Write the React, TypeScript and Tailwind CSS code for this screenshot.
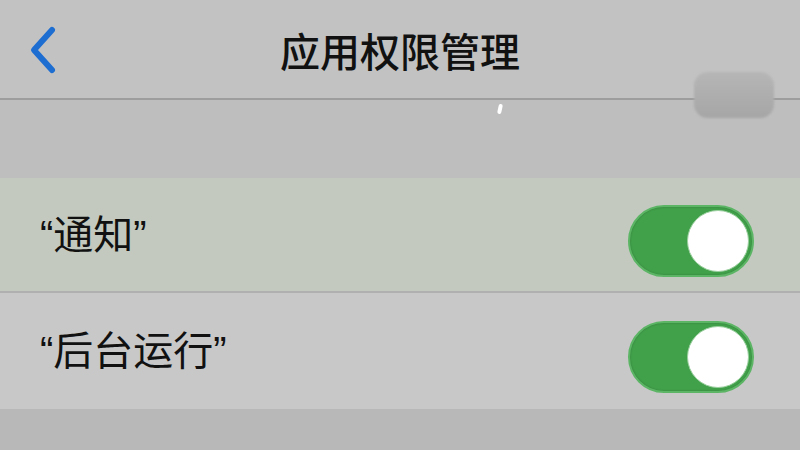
import React from "react";

const cjk = { fontFamily: '"Liberation Sans", "Noto Sans CJK SC", sans-serif' };

function Toggle() {
  return (
    <div className="mt-[12px] flex h-[72px] w-[126px] items-center justify-end rounded-full border-2 border-[#5cb565] bg-[#41a04a] p-[3px] shadow-[inset_0_0_2px_rgba(0,0,0,0.25)]">
      <div className="h-[62px] w-[62px] rounded-full border border-[#9bcf9f] bg-white" />
    </div>
  );
}

function Row({ label, bg, h, border }: { label: string; bg: string; h: string; border?: boolean }) {
  return (
    <div className={`flex items-center justify-between pl-[40px] pr-[46px] ${h} ${bg} ${border ? "border-b-2 border-[#b0b0b0]" : ""}`}>
      <span className="text-[40px] leading-none text-[#111]" style={cjk}>
        {label}
      </span>
      <Toggle />
    </div>
  );
}

export default function App() {
  return (
    <div className="flex h-[450px] w-[800px] flex-col overflow-hidden bg-[#bdbdbd]" style={cjk}>
      {/* navigation bar */}
      <div className="relative flex h-[100px] items-center justify-center border-b-2 border-[#9d9d9d] bg-[#c2c2c2]">
        <svg className="absolute left-[22px] top-[24px]" width="40" height="52" viewBox="0 0 40 52">
          <path d="M30 6 L12 26 L30 46" fill="none" stroke="#1e6ed2" strokeWidth="6" strokeLinecap="round" strokeLinejoin="round" />
        </svg>
        <span className="pt-[8px] text-[40px] font-medium leading-none text-[#111]">应用权限管理</span>
        <div className="absolute right-[26px] top-[72px] z-10 h-[46px] w-[80px] rounded-[14px] bg-gradient-to-b from-[#b6b6b6] to-[#a6a6a6] blur-[1px]" />
      </div>
      {/* spacer section */}
      <div className="relative h-[78px] bg-[#bebebe]">
        <div className="absolute left-[498px] top-[4px] h-[10px] w-[4px] rotate-12 rounded-full bg-white" />
      </div>
      <Row label="“通知”" bg="bg-[#c3c9bf]" h="h-[115px]" border />
      <Row label="“后台运行”" bg="bg-[#c8c8c8]" h="h-[116px]" />
      <div className="flex-1 bg-[#b8b8b8]" />
    </div>
  );
}
